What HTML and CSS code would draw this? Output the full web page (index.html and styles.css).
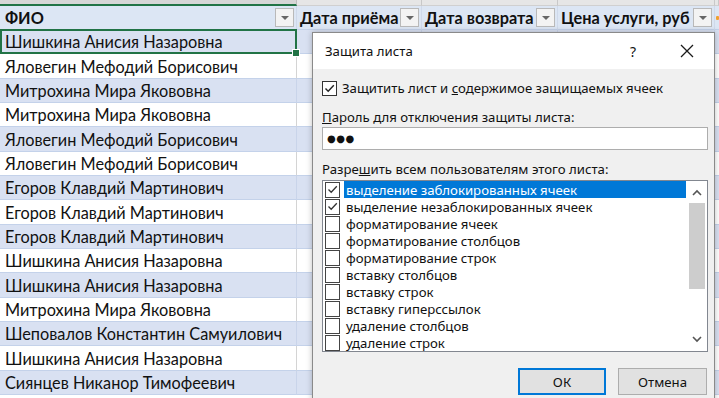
FILE: index.html
```html
<!DOCTYPE html>
<html lang="ru">
<head>
<meta charset="utf-8">
<link rel="stylesheet" href="styles.css">
</head>
<body>
<div class="sheet">
  <div class="colheads">
    <div class="ch ch-a"></div><div class="ch ch-b"></div><div class="ch ch-c"></div><div class="ch ch-d"></div><div class="ch ch-e"></div>
  </div>
  <div class="row hdr">
    <div class="cell a"><span class="ht">ФИО</span><span class="dd"></span></div>
    <div class="cell b"><span class="ht">Дата приёма</span><span class="dd"></span></div>
    <div class="cell c"><span class="ht">Дата возврата</span><span class="dd"></span></div>
    <div class="cell d"><span class="ht">Цена услуги, руб</span><span class="dd"></span></div>
    <div class="cell e"><span class="orange"></span></div>
  </div>
  <div class="row band sel"><div class="cell a">Шишкина Анисия Назаровна<span class="handle"></span></div><div class="cell b"></div><div class="cell c"></div><div class="cell d"></div><div class="cell e"></div></div>
  <div class="row"><div class="cell a">Яловегин Мефодий Борисович</div><div class="cell b"></div><div class="cell c"></div><div class="cell d"></div><div class="cell e"></div></div>
  <div class="row band"><div class="cell a">Митрохина Мира Якововна</div><div class="cell b"></div><div class="cell c"></div><div class="cell d"></div><div class="cell e"></div></div>
  <div class="row"><div class="cell a">Митрохина Мира Якововна</div><div class="cell b"></div><div class="cell c"></div><div class="cell d"></div><div class="cell e"></div></div>
  <div class="row band"><div class="cell a">Яловегин Мефодий Борисович</div><div class="cell b"></div><div class="cell c"></div><div class="cell d"></div><div class="cell e"></div></div>
  <div class="row"><div class="cell a">Яловегин Мефодий Борисович</div><div class="cell b"></div><div class="cell c"></div><div class="cell d"></div><div class="cell e"></div></div>
  <div class="row band"><div class="cell a">Егоров Клавдий Мартинович</div><div class="cell b"></div><div class="cell c"></div><div class="cell d"></div><div class="cell e"></div></div>
  <div class="row"><div class="cell a">Егоров Клавдий Мартинович</div><div class="cell b"></div><div class="cell c"></div><div class="cell d"></div><div class="cell e"></div></div>
  <div class="row band"><div class="cell a">Егоров Клавдий Мартинович</div><div class="cell b"></div><div class="cell c"></div><div class="cell d"></div><div class="cell e"></div></div>
  <div class="row"><div class="cell a">Шишкина Анисия Назаровна</div><div class="cell b"></div><div class="cell c"></div><div class="cell d"></div><div class="cell e"></div></div>
  <div class="row band"><div class="cell a">Шишкина Анисия Назаровна</div><div class="cell b"></div><div class="cell c"></div><div class="cell d"></div><div class="cell e"></div></div>
  <div class="row"><div class="cell a">Митрохина Мира Якововна</div><div class="cell b"></div><div class="cell c"></div><div class="cell d"></div><div class="cell e"></div></div>
  <div class="row band"><div class="cell a">Шеповалов Константин Самуилович</div><div class="cell b"></div><div class="cell c"></div><div class="cell d"></div><div class="cell e"></div></div>
  <div class="row"><div class="cell a">Шишкина Анисия Назаровна</div><div class="cell b"></div><div class="cell c"></div><div class="cell d"></div><div class="cell e"></div></div>
  <div class="row band"><div class="cell a">Сиянцев Никанор Тимофеевич</div><div class="cell b"></div><div class="cell c"></div><div class="cell d"></div><div class="cell e"></div></div>
</div>

<div class="dialog">
  <div class="titlebar">
    <span class="title">Защита листа</span>
    <span class="help">?</span>
    <svg class="close" width="14" height="14" viewBox="0 0 14 14"><path d="M1 1 L13 13 M13 1 L1 13" stroke="#1a1a1a" stroke-width="1.3" fill="none"/></svg>
  </div>
  <div class="body">
    <div class="chkrow">
      <span class="chk"><svg width="13" height="13" viewBox="0 0 13 13"><polyline points="2.5,6.5 5.2,9.3 10.8,3.2" stroke="#222" stroke-width="1.4" fill="none"/></svg></span>
      <span>Защитить лист и <u>с</u>одержимое защищаемых ячеек</span>
    </div>
    <div class="lbl lbl-pass"><u>П</u>ароль для отключения защиты листа:</div>
    <div class="input"><span class="dots">●●●</span></div>
    <div class="lbl lbl-allow">Разре<u>ш</u>ить всем пользователям этого листа:</div>
    <div class="listbox">
      <div class="items">
        <div class="item"><span class="chk"><svg width="13" height="13" viewBox="0 0 13 13"><polyline points="2.5,6.5 5.2,9.3 10.8,3.2" stroke="#333" stroke-width="1.3" fill="none"/></svg></span><span class="it selected">выделение заблокированных ячеек</span></div>
        <div class="item"><span class="chk"><svg width="13" height="13" viewBox="0 0 13 13"><polyline points="2.5,6.5 5.2,9.3 10.8,3.2" stroke="#333" stroke-width="1.3" fill="none"/></svg></span><span class="it">выделение незаблокированных ячеек</span></div>
        <div class="item"><span class="chk"></span><span class="it">форматирование ячеек</span></div>
        <div class="item"><span class="chk"></span><span class="it">форматирование столбцов</span></div>
        <div class="item"><span class="chk"></span><span class="it">форматирование строк</span></div>
        <div class="item"><span class="chk"></span><span class="it">вставку столбцов</span></div>
        <div class="item"><span class="chk"></span><span class="it">вставку строк</span></div>
        <div class="item"><span class="chk"></span><span class="it">вставку гиперссылок</span></div>
        <div class="item"><span class="chk"></span><span class="it">удаление столбцов</span></div>
        <div class="item"><span class="chk"></span><span class="it">удаление строк</span></div>
      </div>
      <div class="scrollbar">
        <div class="arrow"><svg width="10" height="7" viewBox="0 0 10 7"><polyline points="1,6 5,2 9,6" stroke="#555" stroke-width="1.6" fill="none"/></svg></div>
        <div class="thumb"></div>
        <div class="track"></div>
        <div class="arrow"><svg width="10" height="7" viewBox="0 0 10 7"><polyline points="1,1 5,5 9,1" stroke="#555" stroke-width="1.6" fill="none"/></svg></div>
      </div>
    </div>
    <div class="buttons">
      <div class="btn ok">ОК</div>
      <div class="btn">Отмена</div>
    </div>
  </div>
</div>
</body>
</html>
```

FILE: styles.css
```css
* { box-sizing: border-box; }
html, body { margin: 0; padding: 0; background: #fff; overflow: hidden; }
body { width: 719px; height: 398px; position: relative; }

.sheet {
  font-family: Lato, "Noto Sans", sans-serif;
  font-size: 16.3px;
  color: #111;
  height: 398px;
  overflow: hidden;
}
.colheads {
  display: grid;
  grid-template-columns: 297px 125px 136px 157px 1fr;
  height: 6px;
}
.ch { background: #e6e6e6; border-right: 1px solid #c8c8c8; border-bottom: 1px solid #d0d0d0; }
.ch-a { background: #d6d6d6; border-bottom: 2px solid #217346; border-right-color: #bdbdbd; }

.row {
  display: grid;
  grid-template-columns: 297px 125px 136px 157px 1fr;
  height: 24.35px;
  background: #fff;
}
.row.band { background: #d9e1f2; }
.row.hdr { height: 24px; background: #dce6f4; font-weight: 700; }
.cell {
  position: relative;
  display: flex;
  align-items: center;
  padding-left: 5px;
  border-right: 1px solid #d4d4d4;
  border-bottom: 1px solid #c4d2ea;
  white-space: nowrap;
  overflow: hidden;
}
.band .cell { border-right-color: #c9d4ea; }
.hdr .cell { border-right-color: #cfd9ea; padding-left: 3px; justify-content: space-between; padding-right: 2px; }
.hdr .cell.a { padding-left: 5px; }
.ht { display: block; }
.dd {
  width: 19px; height: 19px;
  background: #f3f3f3;
  border: 1px solid #b9b9b9;
  position: relative;
  flex: none;
}
.dd::after {
  content: "";
  position: absolute;
  left: 5px; top: 7px;
  border-left: 4px solid transparent;
  border-right: 4px solid transparent;
  border-top: 4px solid #666;
}
.orange { position: absolute; left: 1px; top: 10px; width: 3px; height: 4px; background: #f0a030; border-radius: 1px; }

.row.sel .cell.a { overflow: visible; }
.row.sel .cell.a::before {
  content: "";
  position: absolute;
  left: 0; top: -1px; right: -1px; bottom: -1px;
  border: 2px solid #217346;
}
.handle {
  position: absolute;
  right: -4px; bottom: -4px;
  width: 6px; height: 6px;
  background: #217346;
  border: 1px solid #fff;
  box-sizing: content-box;
  z-index: 2;
}

/* dialog */
.dialog {
  position: absolute;
  left: 312px; top: 32px;
  width: 403px; height: 380px;
  border: 1px solid #8a8a8a;
  background: #f0f0f0;
  box-shadow: 0 0 6px rgba(0,0,0,0.25);
  font-family: "Noto Sans", "Open Sans", sans-serif;
  font-size: 13.2px;
  color: #111;
  z-index: 5;
}
.titlebar {
  height: 36px;
  background: #fff;
  display: flex;
  align-items: center;
  padding-left: 12px;
  padding-right: 20px;
}
.title { flex: 1; }
.help { margin-right: 44px; font-size: 14px; }
.close { display: block; }

.body { padding: 11px 6px 0 9px; }
.chkrow { display: flex; align-items: center; gap: 5px; height: 16px; }
.chk {
  width: 15px; height: 15px;
  border: 1px solid #333;
  background: #fff;
  display: flex; align-items: center; justify-content: center;
  flex: none;
}
.lbl { height: 19px; display: flex; align-items: center; }
.lbl-pass { margin-top: 11px; }
.input {
  margin-top: 1px;
  height: 23px;
  background: #fff;
  border: 1px solid #adadad;
  display: flex; align-items: center;
  padding-left: 4px;
}
.dots { font-size: 10px; letter-spacing: 0.5px; font-family: "DejaVu Sans", sans-serif; }
.lbl-allow { margin-top: 9px; }

.listbox {
  margin-top: 2px;
  height: 172px;
  background: #fff;
  border: 1px solid #828790;
  display: flex;
  padding: 0 1px 1px 2px;
}
.items { flex: 1; }
.item { height: 17px; display: flex; align-items: center; }
.item .chk { border-color: #444; width: 15px; height: 16px; }
.it { margin-left: 4px; height: 17px; display: flex; align-items: center; padding-left: 2px; }
.it.selected { background: #0078d7; color: #fff; flex: 1; margin-right: 2px; }
.scrollbar { width: 18px; display: flex; flex-direction: column; }
.arrow { height: 22px; display: flex; align-items: center; justify-content: center; }
.thumb { height: 86px; background: #cdcdcd; margin: 0 1px; }
.track { flex: 1; }

.buttons { display: flex; justify-content: flex-end; gap: 12px; margin-top: 16px; padding-right: 1px; }
.btn {
  width: 89px; height: 27px;
  background: #e1e1e1;
  border: 1px solid #adadad;
  display: flex; align-items: center; justify-content: center;
}
.btn.ok { border: 2px solid #0078d7; width: 88px; }
```
